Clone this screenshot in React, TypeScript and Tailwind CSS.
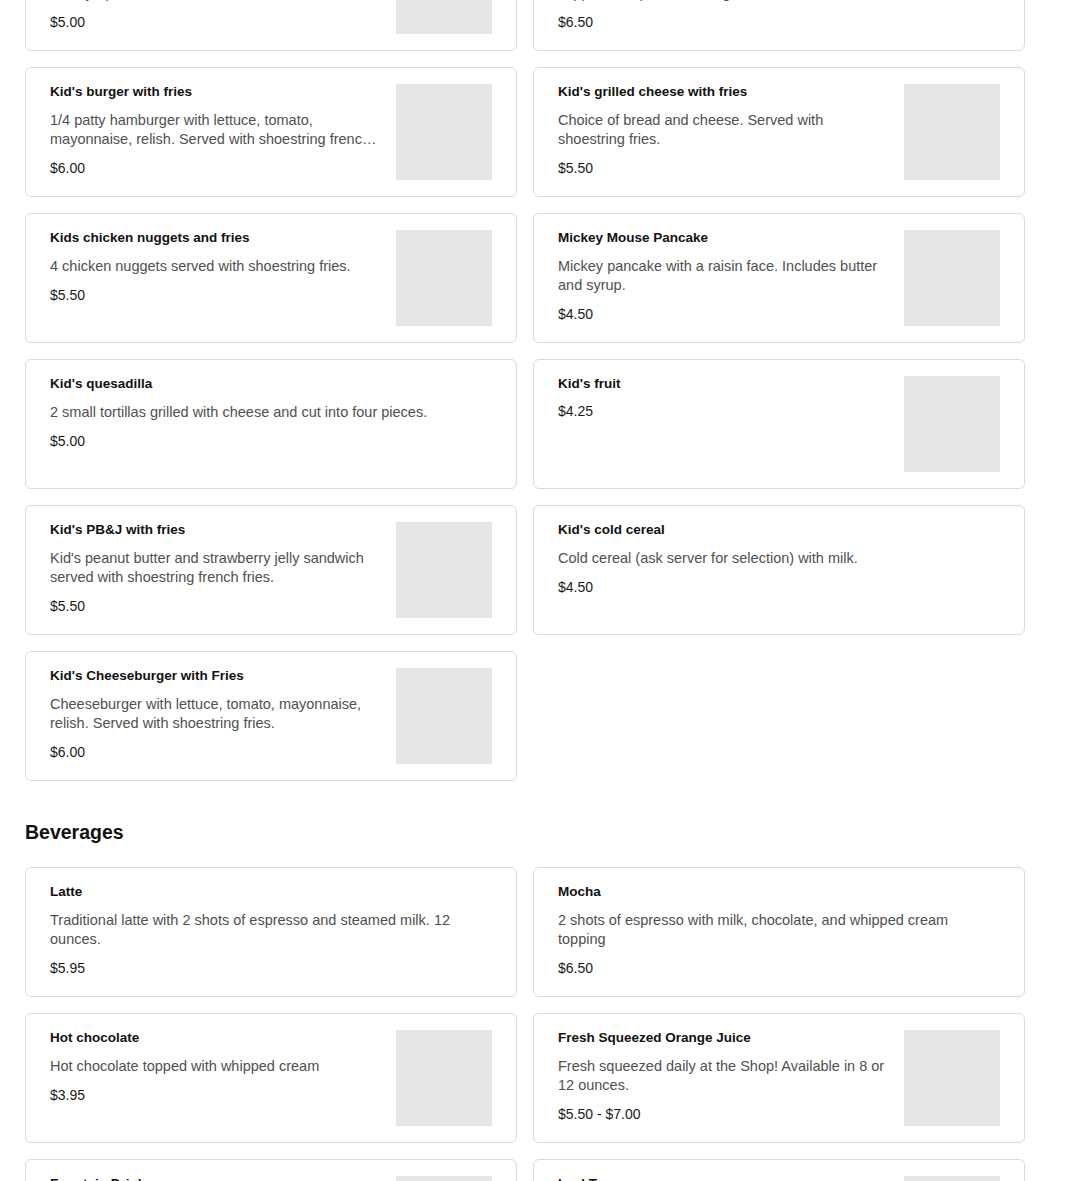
import React from "react";

type Item = {
  name: string;
  desc?: React.ReactNode;
  price: string;
  image?: boolean;
};

function Card({ item }: { item: Item }) {
  return (
    <div className="flex items-start min-h-[130px] rounded-[6px] border border-[#dadada] bg-white px-6 py-4">
      <div className="flex min-w-0 flex-1 flex-col">
        <div className="text-[13.5px] font-bold leading-[16px] text-[#111111]">{item.name}</div>
        {item.desc ? (
          <div className="mt-[11px] line-clamp-2 text-[14.5px] leading-[19px] text-[#505050]">{item.desc}</div>
        ) : null}
        <div className={(item.desc ? "mt-[9px]" : "mt-[9px]") + " text-[14px] leading-[20px] text-[#1a1a1a]"}>
          {item.price}
        </div>
      </div>
      {item.image ? <div className="ml-4 h-24 w-24 shrink-0 bg-[#e6e6e6]" /> : null}
    </div>
  );
}

const kids: Item[] = [
  {
    name: "Kid's pancakes",
    desc: "Two small buttermilk pancakes served with butter and syrup.",
    price: "$5.00",
    image: true,
  },
  {
    name: "Kid's French toast",
    desc: "One slice of thick cut French toast served with butter and syrup. Topped with powdered sugar and fresh berries.",
    price: "$6.50",
  },
  {
    name: "Kid's burger with fries",
    desc: "1/4 patty hamburger with lettuce, tomato, mayonnaise, relish. Served with shoestring french fries.",
    price: "$6.00",
    image: true,
  },
  {
    name: "Kid's grilled cheese with fries",
    desc: "Choice of bread and cheese. Served with shoestring fries.",
    price: "$5.50",
    image: true,
  },
  {
    name: "Kids chicken nuggets and fries",
    desc: "4 chicken nuggets served with shoestring fries.",
    price: "$5.50",
    image: true,
  },
  {
    name: "Mickey Mouse Pancake",
    desc: "Mickey pancake with a raisin face. Includes butter and syrup.",
    price: "$4.50",
    image: true,
  },
  {
    name: "Kid's quesadilla",
    desc: "2 small tortillas grilled with cheese and cut into four pieces.",
    price: "$5.00",
  },
  {
    name: "Kid's fruit",
    price: "$4.25",
    image: true,
  },
  {
    name: "Kid's PB&J with fries",
    desc: "Kid's peanut butter and strawberry jelly sandwich served with shoestring french fries.",
    price: "$5.50",
    image: true,
  },
  {
    name: "Kid's cold cereal",
    desc: "Cold cereal (ask server for selection) with milk.",
    price: "$4.50",
  },
  {
    name: "Kid's Cheeseburger with Fries",
    desc: "Cheeseburger with lettuce, tomato, mayonnaise, relish. Served with shoestring fries.",
    price: "$6.00",
    image: true,
  },
];

const beverages: Item[] = [
  {
    name: "Latte",
    desc: "Traditional latte with 2 shots of espresso and steamed milk. 12 ounces.",
    price: "$5.95",
  },
  {
    name: "Mocha",
    desc: (
      <>
        2 shots of espresso with milk, chocolate, and whipped cream
        <br />
        topping
      </>
    ),
    price: "$6.50",
  },
  {
    name: "Hot chocolate",
    desc: "Hot chocolate topped with whipped cream",
    price: "$3.95",
    image: true,
  },
  {
    name: "Fresh Squeezed Orange Juice",
    desc: "Fresh squeezed daily at the Shop! Available in 8 or 12 ounces.",
    price: "$5.50 - $7.00",
    image: true,
  },
  {
    name: "Fountain Drink",
    desc: "Coke, Diet Coke, Sprite, root beer, or lemonade.",
    price: "$2.95",
    image: true,
  },
  {
    name: "Iced Tea",
    desc: "Freshly brewed unsweetened black iced tea.",
    price: "$2.95",
    image: true,
  },
];

export default function App() {
  return (
    <div className="min-h-screen bg-white" style={{ fontFamily: '"Liberation Sans", Arial, sans-serif' }}>
      <div className="ml-[25px] mt-[-79px] w-[1000px] pb-10">
        <div className="grid grid-cols-2 gap-4">
          {kids.map((it) => (
            <Card key={it.name} item={it} />
          ))}
        </div>
        <h2 className="mb-[21px] mt-[37px] text-[19.5px] font-bold leading-[28px] text-[#111111]">Beverages</h2>
        <div className="grid grid-cols-2 gap-4">
          {beverages.map((it) => (
            <Card key={it.name} item={it} />
          ))}
        </div>
      </div>
    </div>
  );
}
